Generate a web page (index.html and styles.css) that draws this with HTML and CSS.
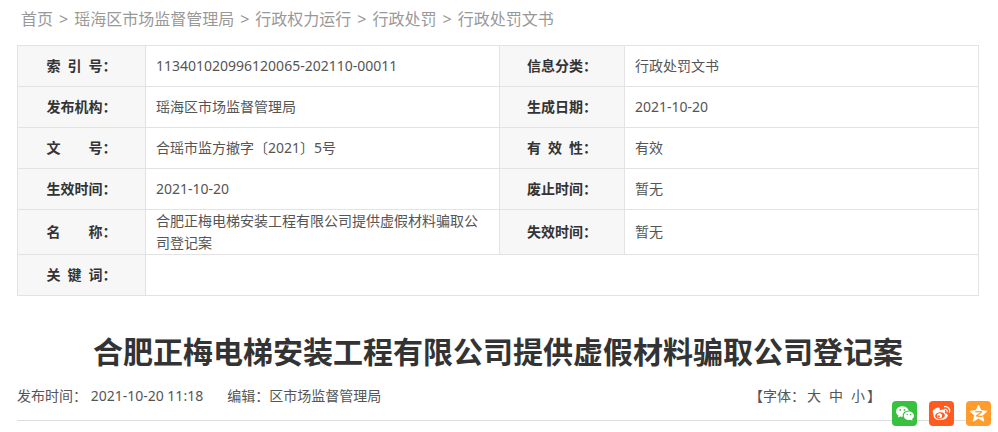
FILE: index.html
```html
<!DOCTYPE html>
<html lang="zh-CN">
<head>
    <meta charset="UTF-8">
    <meta name="viewport" content="width=device-width, initial-scale=1.0">
    <title>合肥正梅电梯安装工程有限公司提供虚假材料骗取公司登记案</title>
    <link rel="stylesheet" href="styles.css">
</head>
<body>
    <div class="container">
        <!-- 当前位置 -->
        <nav class="breadcrumb">
            <a href="#">首页</a>
            <span>&gt;</span>
            <a href="#">瑶海区市场监督管理局</a>
            <span>&gt;</span>
            <a href="#">行政权力运行</a>
            <span>&gt;</span>
            <a href="#">行政处罚</a>
            <span>&gt;</span>
            <a href="#">行政处罚文书</a>
        </nav>

        <!-- 信息公开目录 -->
        <table class="info-table">
            <colgroup>
                <col class="col-label">
                <col>
                <col class="col-label-right">
                <col>
            </colgroup>
            <tbody>
                <tr>
                    <th scope="row">索&ensp;引&ensp;号：</th>
                    <td>113401020996120065-202110-00011</td>
                    <th scope="row">信息分类：</th>
                    <td>行政处罚文书</td>
                </tr>
                <tr>
                    <th scope="row">发布机构：</th>
                    <td>瑶海区市场监督管理局</td>
                    <th scope="row">生成日期：</th>
                    <td>2021-10-20</td>
                </tr>
                <tr>
                    <th scope="row">文&emsp;&emsp;号：</th>
                    <td>合瑶市监方撤字〔2021〕5号</td>
                    <th scope="row">有&ensp;效&ensp;性：</th>
                    <td>有效</td>
                </tr>
                <tr>
                    <th scope="row">生效时间：</th>
                    <td>2021-10-20</td>
                    <th scope="row">废止时间：</th>
                    <td>暂无</td>
                </tr>
                <tr>
                    <th scope="row">名&emsp;&emsp;称：</th>
                    <td>合肥正梅电梯安装工程有限公司提供虚假材料骗取公司登记案</td>
                    <th scope="row">失效时间：</th>
                    <td>暂无</td>
                </tr>
                <tr>
                    <th scope="row">关&ensp;键&ensp;词：</th>
                    <td colspan="3"></td>
                </tr>
            </tbody>
        </table>

        <!-- 正文标题 -->
        <h1 class="title">合肥正梅电梯安装工程有限公司提供虚假材料骗取公司登记案</h1>

        <div class="meta">
            <div class="meta-info">
                <span>发布时间： 2021-10-20 11:18</span>
                <span>编辑：区市场监督管理局</span>
            </div>
            <div class="font-size">
                <span>【字体：</span>
                <button type="button">大</button>
                <button type="button">中</button>
                <button type="button">小</button>
                <span>】</span>
            </div>

            <!-- 分享按钮 -->
            <div class="share">
                <a href="#" class="share-wechat" aria-label="分享到微信">
                    <svg viewBox="0 0 25 25" width="25" height="25">
                        <path fill="#fff" d="M10.4 5.2C6.800 5.200 4 7.500 4 10.400c0 1.700.9 3.100 2.400 4.100L5.900 16.600l2.300-1.200c.7.200 1.400.3 2.200.3h.5c-.1-.4-.2-.8-.2-1.200 0-2.700 2.500-4.700 5.600-4.700h.5C16.200 7 13.500 5.200 10.400 5.200z"/>
                        <path fill="#fff" d="M22 14.700c0-2.400-2.300-4.300-5.100-4.300s-5.100 1.900-5.100 4.300 2.300 4.300 5.100 4.300c.6 0 1.200-.1 1.700-.2l1.900 1-.5-1.700c1.200-.8 2-2 2-3.400z"/>
                        <g fill="#38c13f">
                            <circle cx="8.300" cy="8.900" r=".9"/>
                            <circle cx="12.500" cy="8.900" r=".9"/>
                            <circle cx="15.200" cy="13.500" r=".7"/>
                            <circle cx="18.600" cy="13.500" r=".7"/>
                        </g>
                    </svg>
                </a>
                <a href="#" class="share-weibo" aria-label="分享到微博">
                    <svg viewBox="0 0 25 25" width="25" height="25">
                        <path fill="#fff" d="M16.300 12.200c-.4-.1-.6-.2-.4-.6.5-1.200.4-2-.1-2.500-.8-.8-2.700-.7-4.700.2 0 0-.7.300-.5-.2.300-1 .3-1.800-.2-2.300-1.200-1.100-4 .1-6 2.200C2.900 10.500 4.500 12 4.600 14.800c.2 2.600 3.100 4.300 6.400 4.300 4.500 0 7.800-2.600 7.800-4.700 0-1.200-1.200-1.900-2.500-2.200z"/>
                        <ellipse cx="11" cy="14.600" rx="4.900" ry="3.300" fill="#ff5a1f" transform="rotate(-8 11 14.600)"/>
                        <circle cx="10.600" cy="14.800" r="2.500" fill="#fff"/>
                        <circle cx="9.900" cy="15.300" r="1" fill="#ff5a1f"/>
                        <path fill="none" stroke="#fff" stroke-width="1.200" stroke-linecap="round" d="M15.700 8.300c1.600-.3 2.800.9 2.400 2.500M15.500 5.700c3.400-.6 5.900 2.200 4.900 5.600"/>
                    </svg>
                </a>
                <a href="#" class="share-qzone" aria-label="分享到QQ空间">
                    <svg viewBox="0 0 25 25" width="25" height="25">
                        <path fill="#fff" stroke="#fff" stroke-width=".8" stroke-linejoin="round" d="M12.500 4l2.500 5.600 6 .6-4.500 4.100 1.300 6-5.300-3.100-5.300 3.100 1.300-6L4 10.200l6-.6z"/>
                        <path fill="none" stroke="#ff9c2b" stroke-width="1.200" stroke-linejoin="round" d="M9.200 10.900c2.300-.4 4.500-.4 6.500 0L10.300 15c2 .5 4 .5 6.500.1"/>
                    </svg>
                </a>
            </div>
        </div>
    </div>
</body>
</html>
```

FILE: styles.css
```css
* {
    margin: 0;
    padding: 0;
    box-sizing: border-box;
}

body {
    min-height: 100vh;
    font-family: "Noto Sans", "Noto Sans CJK SC", sans-serif;
    font-size: 14px;
    line-height: 22px;
    color: #555;
    background: #fff;
}

a {
    color: inherit;
    text-decoration: none;
}

.container {
    padding: 0 19px 11px 17px;
}

/* 当前位置 */
.breadcrumb {
    display: flex;
    gap: 6px;
    padding: 7px 4px 14px;
    font-size: 16px;
    line-height: 24px;
    color: #999;
}

/* 信息表格 */
.info-table {
    width: 100%;
    table-layout: fixed;
    border-collapse: collapse;
}

.col-label {
    width: 128px;
}

.col-label-right {
    width: 125px;
}

.info-table th,
.info-table td {
    height: 41px;
    border: 1px solid #e3e3e3;
}

.info-table th {
    background: #f7f7f7;
    color: #333;
    font-weight: bold;
    text-align: center;
}

.info-table td {
    padding: 0 10px;
}

/* 标题 */
.title {
    padding: 34px 0 11px;
    font-size: 30px;
    line-height: 44px;
    color: #333;
    text-align: center;
}

.meta {
    position: relative;
    display: flex;
    justify-content: space-between;
    padding-bottom: 13px;
    border-bottom: 1px solid #ddd;
}

.meta-info {
    display: flex;
    gap: 24px;
}

.font-size {
    display: flex;
    gap: 8px;
    margin-right: 98px;
}

.font-size span:first-child {
    margin-right: -6px;
}

.font-size span:last-child {
    margin-left: -6px;
}

.font-size button {
    border: none;
    background: none;
    font: inherit;
    color: inherit;
    cursor: pointer;
}

/* 分享按钮浮在分隔线上 */
.share {
    position: absolute;
    right: -12px;
    bottom: -6px;
    display: flex;
    gap: 12px;
}

.share a {
    width: 25px;
    height: 25px;
    border-radius: 4px;
}

.share svg {
    display: block;
}

.share-wechat {
    background: #38c13f;
}

.share-weibo {
    background: #ff5a1f;
}

.share-qzone {
    background: #ff9c2b;
}
```
